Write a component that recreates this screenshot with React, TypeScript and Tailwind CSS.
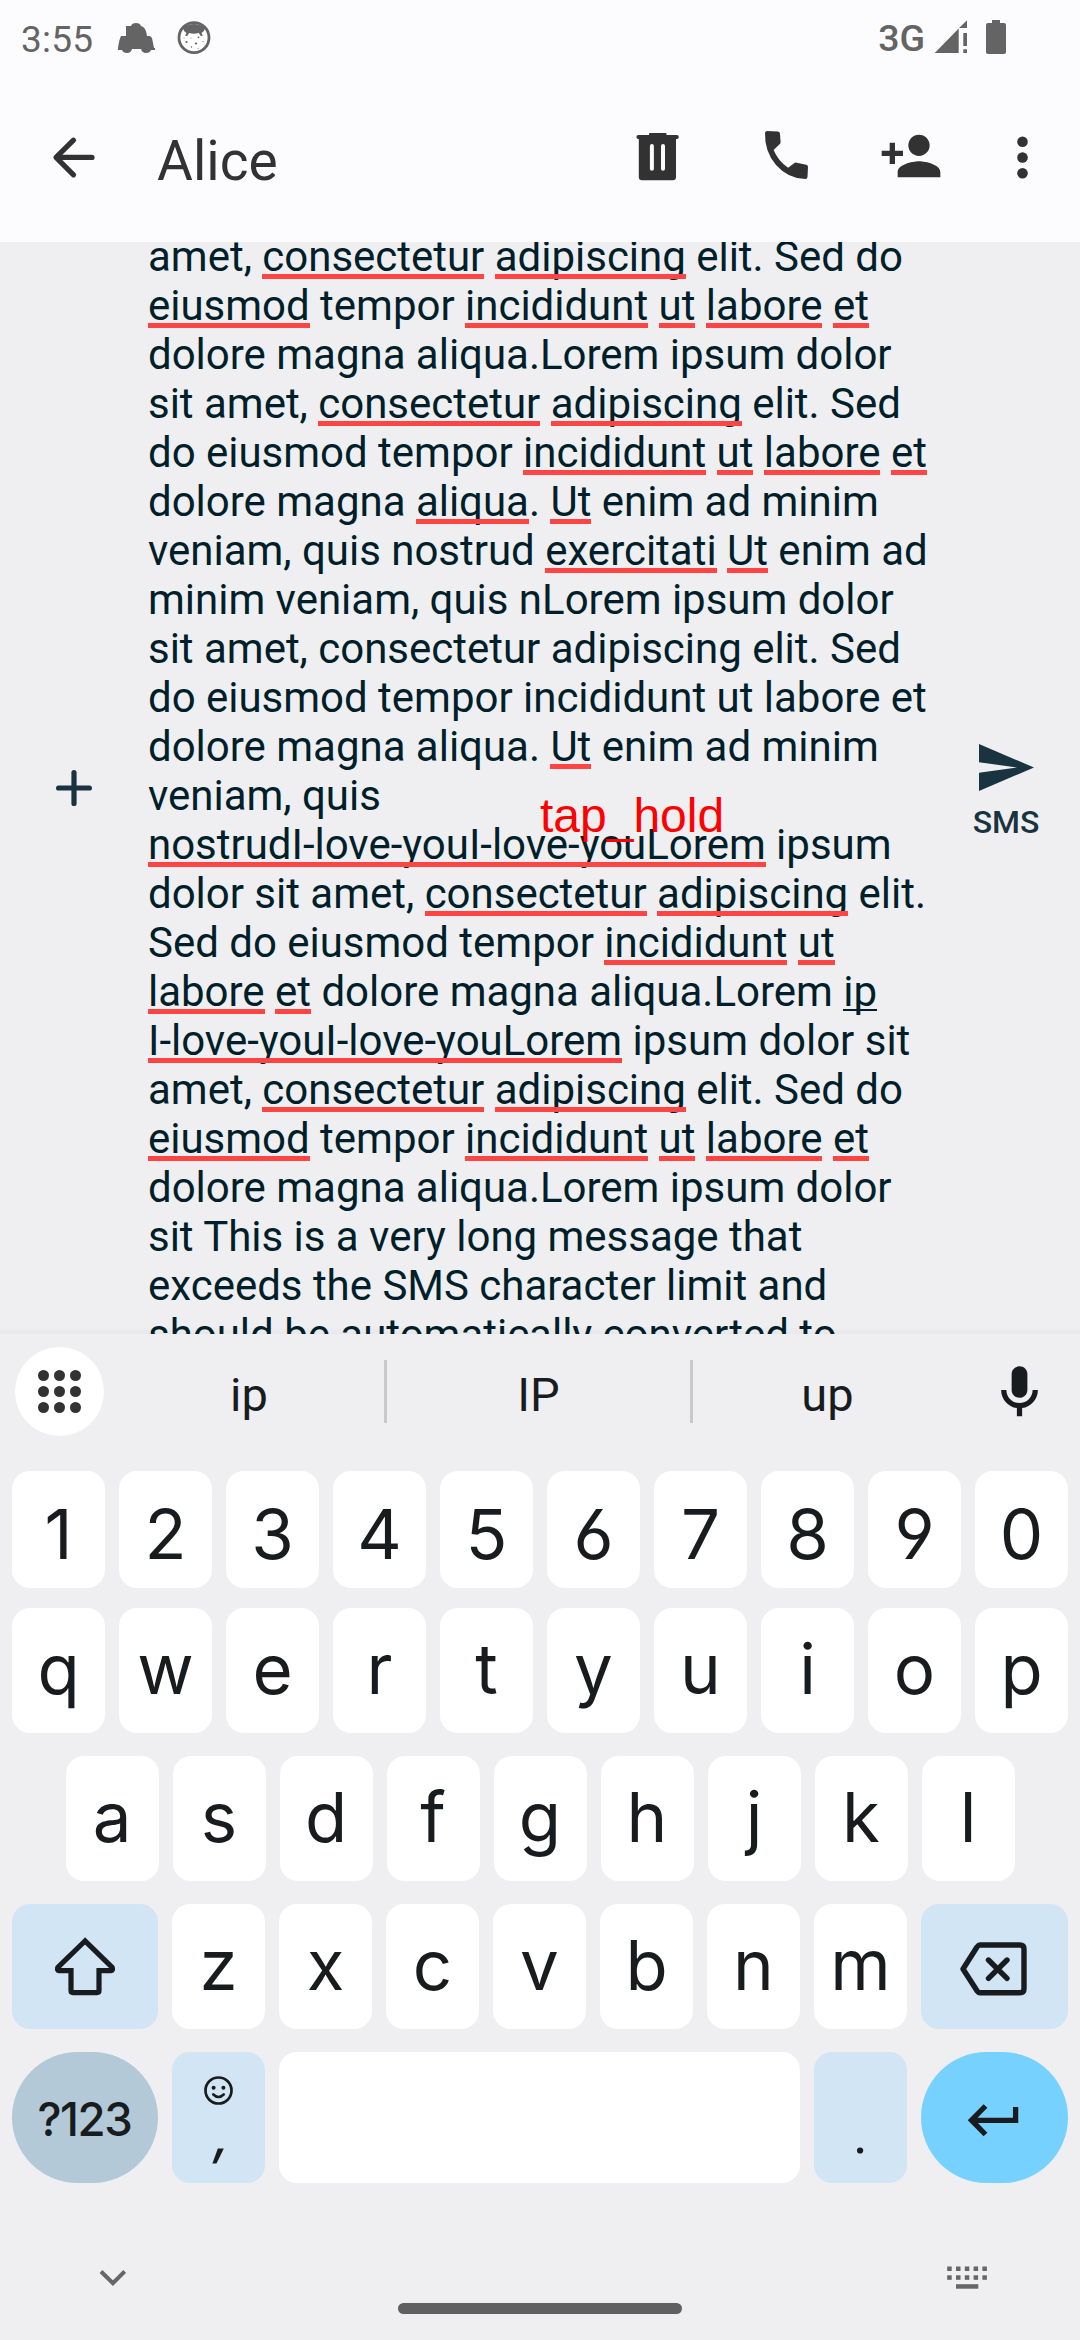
import React from "react";

type Part = string | { t: string; k: "bad" | "compose" };
const b = (t: string): Part => ({ t, k: "bad" });

const CONS = b("consectetur");
const ADIP = b("adipiscing");

const LINES: Part[][] = [
  ["amet, ", CONS, " ", ADIP, " elit. Sed do"],
  [b("eiusmod"), " tempor ", b("incididunt"), " ", b("ut"), " ", b("labore"), " ", b("et")],
  ["dolore magna aliqua.Lorem ipsum dolor"],
  ["sit amet, ", CONS, " ", ADIP, " elit. Sed"],
  ["do eiusmod tempor ", b("incididunt"), " ", b("ut"), " ", b("labore"), " ", b("et")],
  ["dolore magna ", b("aliqua"), ". ", b("Ut"), " enim ad minim"],
  ["veniam, quis nostrud ", b("exercitati"), " ", b("Ut"), " enim ad"],
  ["minim veniam, quis nLorem ipsum dolor"],
  ["sit amet, consectetur adipiscing elit. Sed"],
  ["do eiusmod tempor incididunt ut labore et"],
  ["dolore magna aliqua. ", b("Ut"), " enim ad minim"],
  ["veniam, quis"],
  [b("nostrudI-love-youI-love-youLorem"), " ipsum"],
  ["dolor sit amet, ", CONS, " ", ADIP, " elit."],
  ["Sed do eiusmod tempor ", b("incididunt"), " ", b("ut")],
  [b("labore"), " ", b("et"), " dolore magna aliqua.Lorem ", { t: "ip", k: "compose" }],
  [b("I-love-youI-love-youLorem"), " ipsum dolor sit"],
  ["amet, ", CONS, " ", ADIP, " elit. Sed do"],
  [b("eiusmod"), " tempor ", b("incididunt"), " ", b("ut"), " ", b("labore"), " ", b("et")],
  ["dolore magna aliqua.Lorem ipsum dolor"],
  ["sit This is a very long message that"],
  ["exceeds the SMS character limit and"],
  ["should be automatically converted to"],
];

const UNDERLINE = {
  bad: "relative after:absolute after:inset-x-0 after:top-[42px] after:h-[5.25px] after:bg-[#ff4444] after:content-['']",
  compose: "relative after:absolute after:inset-x-0 after:top-[42px] after:h-[2px] after:bg-[#001f2a] after:content-['']",
};

function Icon({ box, className = "", children }: { box: string; className?: string; children: React.ReactNode }) {
  const [, , w, h] = box.split(" ");
  return (
    <svg viewBox={box} width={w} height={h} fill="currentColor" className={"block shrink-0 " + className}>
      {children}
    </svg>
  );
}

function StatusBar() {
  return (
    <div className="flex h-[75px] items-start pl-[21px] text-[#646464]">
      <span className="mt-[17px] w-[72px] text-[37px] leading-[46px] tracking-[0.2px]">3:55</span>
      <Icon box="118 23 37 30" className="mt-[23px] ml-[25px]">
        <path d="M126 26h5q1-3 5-3t5 3q5 1 6 10h3l2 2 2 10h1v2h-4q-1 3-5 3t-5-4h-9q-1 4-5 4t-5-3h-4v-2q1-8 3-12h5z" />
      </Icon>
      <Icon box="177 21 34 34" className="mt-[21px] ml-[22px]">
        <circle cx="194" cy="37.700" r="15" fill="#fff" stroke="currentColor" strokeWidth="2.800" />
        <path d="M183 28q11-8 22 0l-1 3-2.500 2 1.300 3h-2l-2-3q-4.800 1.500-9.600 0l-2 3h-2l1.300-3-2.500-2z" />
        <g>
          <circle cx="186.500" cy="42" r="1.100" />
          <circle cx="196" cy="43.500" r="1.100" />
          <circle cx="198.500" cy="37.300" r="0.900" />
          <circle cx="191" cy="38" r="0.500" />
          <circle cx="203" cy="41.500" r="0.600" />
          <circle cx="191.500" cy="47" r="0.700" />
          <circle cx="198" cy="48.500" r="0.500" />
          <circle cx="184" cy="38" r="0.500" />
        </g>
      </Icon>
      <span className="mt-[15px] ml-auto text-[37.500px] leading-[46px] font-medium">3G</span>
      <Icon box="934 20 34 34" className="mt-[20px] ml-[9px]">
        <path d="M934.700 53 958.700 28.500V53zM959 28l8-7.700V28zM963.300 33h3.700v13h-3.700zM963.300 49.300h3.700V53h-3.700z" />
      </Icon>
      <Icon box="986 20 20 34" className="mt-[20px] mr-[74px] ml-[18px]">
        <path d="M992 20h8v3h4q2 0 2 2v27q0 2-2 2h-16q-2 0-2-2V25q0-2 2-2h4z" />
      </Icon>
    </div>
  );
}

function AppBar() {
  return (
    <div className="flex h-[167px] items-start pl-[52px] text-[#323232]">
      <Icon box="52 136 44 44" className="mt-[61px]">
        <path d="M92 157.400H57M73.500 140.200 56 157.400 73.500 174.800" fill="none" stroke="currentColor" strokeWidth="5.200" strokeLinecap="round" strokeLinejoin="round" />
      </Icon>
      <h1 className="mt-[54px] ml-[61px] text-[55px] leading-[64px]">Alice</h1>
      <Icon box="636 132 43 49" className="mt-[57px] ml-auto">
        <path fillRule="evenodd" d="M649 135v-1q0-1 1-1h15.500q1 0 1 1v1h10.300q2 0 2 2t-2 2H676v38q0 3.300-3.300 3.300H642q-3.200 0-3.200-3.300v-38h-.4q-2 0-2-2t2-2zM651.900 144q-2 0-2 2v22.700q0 2 2 2t2-2V146q0-2-2-2zm11.100 0q-2 0-2 2v22.700q0 2 2 2t2-2V146q0-2-2-2z" />
      </Icon>
      <Icon box="764 130 45 50" className="mt-[55px] ml-[85px]">
        <path d="M767 131 778 131.500q2 .2 2 2.200l.6 8.500q0 1.200-1 2l-6 5.800q4.600 11 14.500 17.800l6-4.600q1.200-.8 2.600-.5l9.500 2q1.900.5 1.800 2.400l-.5 10q-.1 2-2.200 2Q788 178.600 776 165 764.500 151.500 765 133.200q0-2 2-2.200z" />
      </Icon>
      <svg viewBox="0 0 24 24" width="64" height="64" fill="currentColor" className="mt-[49px] ml-[70px] block shrink-0">
        <path d="M15 12c2.210 0 4-1.790 4-4s-1.790-4-4-4-4 1.790-4 4 1.790 4 4 4zm-9-2V7H4v3H1v2h3v3h2v-3h3v-2H6zm9 4c-2.670 0-8 1.340-8 4v2h16v-2c0-2.660-5.330-4-8-4z" />
      </svg>
      <Icon box="1017 136 11 43" className="mt-[61px] mr-[52px] ml-[74px]">
        <circle cx="1022.500" cy="141.700" r="5.300" />
        <circle cx="1022.500" cy="157.500" r="5.300" />
        <circle cx="1022.500" cy="173.300" r="5.300" />
      </Icon>
    </div>
  );
}

function Composer() {
  return (
    <div className="relative flex h-[1092px] overflow-hidden bg-[#efeff2]">
      <div className="w-[148px] shrink-0 pl-[56px] text-[#1a3340]">
        <Icon box="0 0 36 36" className="mt-[528px]">
          <path d="M18 2.600v30.800M2.600 18h30.800" fill="none" stroke="currentColor" strokeWidth="5.200" strokeLinecap="round" />
        </Icon>
      </div>
      <div className="-mt-[10px] w-[800px] shrink-0 text-[42px] leading-[49px] tracking-[-0.015px] whitespace-pre text-[#001f2a]">
        {LINES.map((line, i) => (
          <div key={i} className="h-[49px]">
            {line.map((p, j) => (typeof p === "string" ? p : <span key={j} className={UNDERLINE[p.k]}>{p.t}</span>))}
          </div>
        ))}
      </div>
      <div className="flex w-[116px] flex-col items-center pt-[502px] text-[#1a3340]">
        <Icon box="979 744 55 47">
          <path d="M979 744 1034 767.500 979 791V772.700L1017 767.500 979 762.300z" />
        </Icon>
        <span className="mt-[12px] text-[32px] leading-[38px] font-medium">SMS</span>
      </div>
      <span className="absolute top-[547px] left-[540px] font-['Liberation_Sans',Arial,sans-serif] text-[48px] leading-[54px] text-[#ff0000]">
        tap_hold
      </span>
      <div className="absolute inset-x-0 bottom-0 h-[8px] bg-gradient-to-b from-transparent to-black/[0.03]" />
    </div>
  );
}

function Suggestions() {
  return (
    <div className="flex h-[137px] items-start pl-[15px] text-[47px] leading-[56px] text-[#191c1e]">
      <div className="mt-[13px] grid h-[89px] w-[89px] shrink-0 grid-cols-[repeat(3,10.6px)] grid-rows-[repeat(3,10.6px)] place-content-center gap-[5.200px] rounded-full bg-white">
        {Array.from({ length: 9 }, (_, i) => (
          <span key={i} className="rounded-full bg-[#323232]" />
        ))}
      </div>
      <span className="mt-[33px] ml-[10px] w-[270px] text-center">ip</span>
      <span className="mt-[26px] h-[63px] w-[3px] bg-[#c9c9cb]" />
      <span className="mt-[33px] w-[303px] text-center">IP</span>
      <span className="mt-[26px] h-[63px] w-[3px] bg-[#c9c9cb]" />
      <span className="mt-[33px] w-[269px] text-center">up</span>
      <svg viewBox="0 0 24 24" width="63" height="63" fill="currentColor" className="mt-[27px] ml-[26px] block shrink-0">
        <path d="M12 14c1.660 0 3-1.340 3-3V5c0-1.660-1.340-3-3-3S9 3.340 9 5v6c0 1.660 1.340 3 3 3z" />
        <path d="M17 11c0 2.760-2.240 5-5 5s-5-2.240-5-5H5c0 3.530 2.610 6.430 6 6.920V21h2v-3.080c3.390-.49 6-3.390 6-6.920h-2z" />
      </svg>
    </div>
  );
}

function Keys({ chars, pad }: { chars: string; pad: string }) {
  return (
    <>
      {chars.split("").map((c) => (
        <div key={c} className={"flex w-[93px] shrink-0 items-center justify-center rounded-[18px] bg-white " + pad}>
          {c}
        </div>
      ))}
    </>
  );
}

function Keyboard() {
  return (
    <div className="flex flex-col items-center font-[Inter,Roboto,sans-serif] text-[69px] leading-[84px] text-[#191c1e] [font-feature-settings:'cv03','cv04']">
      <div className="flex h-[117px] gap-[14px]">
        <Keys chars="1234567890" pad="pt-[9px]" />
      </div>
      <div className="mt-[20px] flex h-[125px] gap-[14px]">
        <Keys chars="qwertyuiop" pad="pb-[4px]" />
      </div>
      <div className="mt-[23px] flex h-[125px] gap-[14px]">
        <Keys chars="asdfghjkl" pad="pb-[4px]" />
      </div>
      <div className="mt-[23px] flex h-[125px] gap-[14px]">
        <div className="flex w-[146px] items-center justify-center rounded-[18px] bg-[#d2e5f4]">
          <Icon box="55 1936 60 59">
            <path d="M85 1940 57.800 1966.500q-1 3 1 3.100H71v20q0 2 2 2h24q2 0 2-2v-20h12.200q2 0 1-3.100z" fill="none" stroke="currentColor" strokeWidth="5.200" />
          </Icon>
        </div>
        <Keys chars="zxcvbnm" pad="pb-[4px]" />
        <div className="flex w-[147px] items-center justify-center rounded-[18px] bg-[#d2e5f4]">
          <Icon box="960 1941 67 55" className="mt-[4px] mr-[2px]">
            <path d="M980 1945h40q4 0 4 4v39.800q0 4-4 4h-40q-1.500 0-3-2L963 1969l14-22q1.500-2 3-2zM988.500 1960l18.500 18.300M1007 1960l-18.500 18.300" fill="none" stroke="currentColor" strokeWidth="5.400" strokeLinecap="round" strokeLinejoin="round" />
          </Icon>
        </div>
      </div>
      <div className="mt-[23px] flex h-[131px] gap-[14px]">
        <div className="flex w-[146px] items-center justify-center rounded-full bg-[#b3c9d7] pt-[3px] pr-[2px] text-[47px] font-medium">
          <span className="origin-center scale-x-[0.97] tracking-[-1.500px]">?123</span>
        </div>
        <div className="flex w-[93px] flex-col items-center rounded-[18px] bg-[#d2e5f4]">
          <Icon box="0 0 29 29" className="mt-[24px]">
            <circle cx="14.500" cy="14.500" r="13" fill="none" stroke="currentColor" strokeWidth="2.700" />
            <circle cx="9.600" cy="11.800" r="2" />
            <circle cx="19.400" cy="11.800" r="2" />
            <path d="M9.300 18.500q5.200 5 10.400 0" fill="none" stroke="currentColor" strokeWidth="2.600" strokeLinecap="round" />
          </Icon>
          <span className="mt-[3px] ml-[8px] -skew-x-12 text-[52px] leading-[56px] font-medium">,</span>
        </div>
        <div className="w-[521px] rounded-[18px] bg-white" />
        <div className="flex w-[93px] justify-center rounded-[18px] bg-[#d2e5f4] pt-[58px] font-[Roboto,sans-serif] text-[56px] leading-[48px]">.</div>
        <div className="flex w-[147px] items-center justify-center rounded-full bg-[#76d1ff]">
          <Icon box="968 2103 51 34" className="mt-[4px] mr-[2px]">
            <path d="M1015.600 2107v13.300H973M985.500 2106 971.500 2120.200 985.500 2134.500" fill="none" stroke="currentColor" strokeWidth="5.300" />
          </Icon>
        </div>
      </div>
    </div>
  );
}

function NavBar() {
  return (
    <div className="flex h-[157px] items-start pl-[99px] text-[#666666]">
      <Icon box="99 2269 27 18" className="mt-[86px]">
        <path d="M101 2271.500 112.900 2283.200 124.700 2271.500" fill="none" stroke="currentColor" strokeWidth="4" />
      </Icon>
      <div className="mt-[120px] ml-[272px] h-[11px] w-[284px] rounded-full bg-[#606060]" />
      <Icon box="947.500 2266 41 23" className="mt-[83px] ml-[265px]">
        {[0, 1].map((r) =>
          [0, 1, 2, 3, 4].map((c) => (
            <rect key={`${r}-${c}`} x={947.700 + c * 8.800} y={2266.500 + r * 8.800} width="4.500" height="4.500" />
          ))
        )}
        <rect x="956.500" y="2284.200" width="22.300" height="4.500" />
      </Icon>
    </div>
  );
}

export default function App() {
  return (
    <div className="h-[2340px] w-[1080px] overflow-hidden bg-[#efeff2] font-[Roboto,sans-serif]">
      <header className="h-[242px] bg-[#fcfcff]">
        <StatusBar />
        <AppBar />
      </header>
      <Composer />
      <Suggestions />
      <Keyboard />
      <NavBar />
    </div>
  );
}
